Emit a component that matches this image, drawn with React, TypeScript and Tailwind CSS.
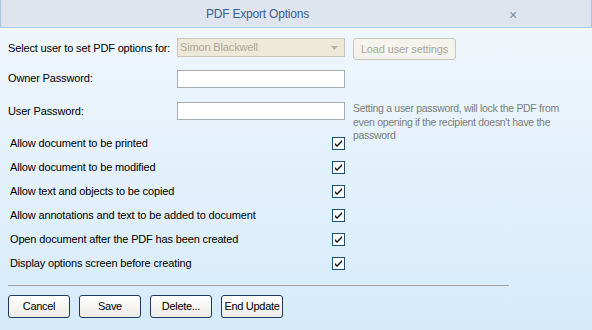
const options = [
  "Allow document to be printed",
  "Allow document to be modified",
  "Allow text and objects to be copied",
  "Allow annotations and text to be added to document",
  "Open document after the PDF has been created",
  "Display options screen before creating",
];

const CheckBox = () => (
  <div className="flex h-[13px] w-[13px] items-center justify-center border border-[#1c4f7c] bg-white">
    <svg width="9" height="9" viewBox="0 0 9 9">
      <path d="M1 4 L3 6 L8 1 L8 3 L3 8 L1 6 Z" fill="#111" />
    </svg>
  </div>
);

const DialogButton = ({ label }: { label: string }) => (
  <button className="h-[23px] w-[62px] rounded-[3px] border border-[#1e3a5f] bg-gradient-to-b from-white to-[#ecebe6] text-[11px] tracking-[-0.3px] text-black">
    {label}
  </button>
);

export default function App() {
  return (
    <div className="flex h-[330px] w-[592px] flex-col overflow-hidden font-['Liberation_Sans',Arial,sans-serif] text-[11px] tracking-[-0.15px] text-black">
      <div className="relative flex h-[28px] shrink-0 items-center justify-center border-b border-l border-r border-[#aac6e8] bg-[#dfe5ee] pr-[77px]">
        <span className="text-[12px] tracking-[-0.2px] text-[#3d5d93]">PDF Export Options</span>
        <span className="absolute right-[74px] top-[5px] text-[14px] text-[#7d8ca3]">×</span>
      </div>
      <div className="flex flex-1 flex-col border-t border-white bg-gradient-to-b from-[#f0f6fc] to-[#d5ebfb] px-[8px] pt-[9px]">
        <div className="flex h-[22px] items-start">
          <span className="w-[169px] shrink-0 pt-[2px]">Select user to set PDF options for:</span>
          <div className="relative flex h-[19px] w-[168px] shrink-0 items-center border border-[#c9c7ba] bg-[#ece9d8] pl-[2px] text-[#aca899]">
            Simon Blackwell
            <svg className="absolute right-[6px] top-[7px]" width="7" height="4" viewBox="0 0 7 4">
              <path d="M0 0 L7 0 L3.5 4 Z" fill="#b4b2a6" />
            </svg>
          </div>
          <button className="ml-[8px] h-[22px] w-[103px] rounded-[3px] border border-[#c9c7ba] bg-[#f4f3ee] text-[11px] tracking-[-0.15px] text-[#aca899]">
            Load user settings
          </button>
        </div>
        <div className="mt-[10px] flex h-[18px] items-start">
          <span className="w-[169px] shrink-0">Owner Password:</span>
          <div className="h-[18px] w-[168px] shrink-0 border border-[#a5acb5] bg-white" />
        </div>
        <div className="mt-[14px] flex h-[18px] items-start">
          <span className="w-[169px] shrink-0 pt-[1px]">User Password:</span>
          <div className="h-[18px] w-[168px] shrink-0 border border-[#a5acb5] bg-white" />
          <p className="ml-[8px] shrink-0 whitespace-nowrap text-[10.5px] leading-[13.5px] tracking-[-0.3px] text-[#7c7c7c]">
            Setting a user password, will lock the PDF from
            <br />
            even opening if the recipient doesn't have the
            <br />
            password
          </p>
        </div>
        <div className="mt-[11px] flex flex-col">
          {options.map((o) => (
            <div key={o} className="flex h-[24px] w-[337px] items-center justify-between pl-[2px]">
              <span>{o}</span>
              <CheckBox />
            </div>
          ))}
        </div>
        <div className="mt-[10px] w-[501px] border-t border-[#a3a3a3]" />
        <div className="mt-[9px] flex gap-[9px]">
          <DialogButton label="Cancel" />
          <DialogButton label="Save" />
          <DialogButton label="Delete..." />
          <DialogButton label="End Update" />
        </div>
      </div>
    </div>
  );
}
